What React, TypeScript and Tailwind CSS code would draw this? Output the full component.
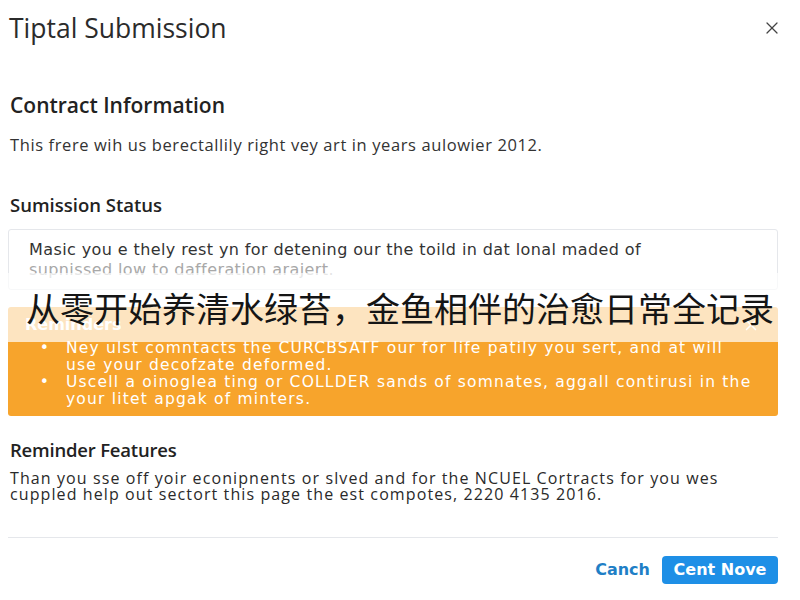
import React from 'react';
import { X } from 'lucide-react';

const reminders = [
  ['Ney ulst comntacts the CURCBSATF our for life patily you sert, and at will', 'use your decofzate deformed.'],
  ['Uscell a oinoglea ting or COLLDER sands of somnates, aggall contirusi in the', 'your litet apgak of minters.'],
];

export default function App() {
  return (
    <div className="relative w-[800px] h-[600px] overflow-hidden bg-white font-['Open_Sans',sans-serif] text-[#2a2a2a]">
      <div className="h-14 flex items-center justify-between pl-[9px] pr-[18px]">
        <h1 className="text-[26.5px] leading-[56px] text-[#2b2b2b]">Tiptal Submission</h1>
        <button className="text-[#444]">
          <X size={20} strokeWidth={1.5} />
        </button>
      </div>

      <div className="pl-2 pr-[22px]">
        <h2 className="mt-[37px] px-[2px] text-[21px] leading-6 font-semibold text-[#222]">Contract Information</h2>
        <p className="mt-[18px] px-[2px] text-[16.5px] leading-5 tracking-[0.6px] text-[#333]">
          This frere wih us berectallily right vey art in years aulowier 2012.
        </p>

        <h3 className="mt-[39px] px-[2px] text-[18.5px] leading-[22px] font-semibold text-[#222]">Sumission Status</h3>
        <div className="mt-[13px] h-[61px] rounded-[3px] border border-gray-200 pt-[10px] pl-5 font-['DejaVu_Sans',sans-serif] text-[16px] leading-5 tracking-[0.4px]">
          <p className="text-[#333]">Masic you e thely rest yn for detening our the toild in dat lonal maded of</p>
          <p className="text-[#a8a8a8]">supnissed low to dafferation arajert.</p>
        </div>

        <div className="mt-[17px] h-[109px] rounded-[3px] bg-[#f7a42c] pt-2 pl-[17px] pr-[18px] text-white font-['DejaVu_Sans',sans-serif]">
          <div className="flex items-center justify-between">
            <span className="text-[16px] leading-5 font-bold">Reminders</span>
            <X size={18} strokeWidth={2} />
          </div>
          <ul className="mt-[5px] -ml-px text-[15.5px] leading-[17px] tracking-[1.2px]">
            {reminders.map((lines, i) => (
              <li key={i} className="flex">
                <span className="w-[42px] shrink-0 text-center">•</span>
                <span className="whitespace-nowrap">
                  {lines[0]}
                  <br />
                  {lines[1]}
                </span>
              </li>
            ))}
          </ul>
        </div>

        <h3 className="mt-[23px] px-[2px] text-[18.5px] leading-[22px] font-semibold tracking-[-0.2px] text-[#222]">Reminder Features</h3>
        <p className="mt-[9px] px-[2px] text-[16px] leading-4 tracking-[1.1px] whitespace-nowrap text-[#2a2a2a]">
          Than you sse off yoir econipnents or slved and for the NCUEL Cortracts for you wes
          <br />
          cuppled help out sectort this page the est compotes, 2220 4135 2016.
        </p>

        <div className="mt-[35px] h-px bg-gray-200" />

        <div className="mt-[18px] flex items-center justify-end gap-3 font-['DejaVu_Sans',sans-serif]">
          <button className="text-[16px] font-bold text-[#1f7fc6]">Canch</button>
          <button className="h-7 w-[116px] rounded-[4px] bg-[#1e8fe6] text-[16px] font-bold text-white">Cent Nove</button>
        </div>
      </div>

      {/* caption band laid over the page */}
      <div className="absolute left-0 right-0 top-[273px] h-[69px] bg-white/70 flex items-center justify-center">
        <span className="text-[34px] leading-none text-[#151515] font-['Noto_Sans_CJK_SC',sans-serif]">
          从零开始养清水绿苔，金鱼相伴的治愈日常全记录
        </span>
      </div>
    </div>
  );
}
